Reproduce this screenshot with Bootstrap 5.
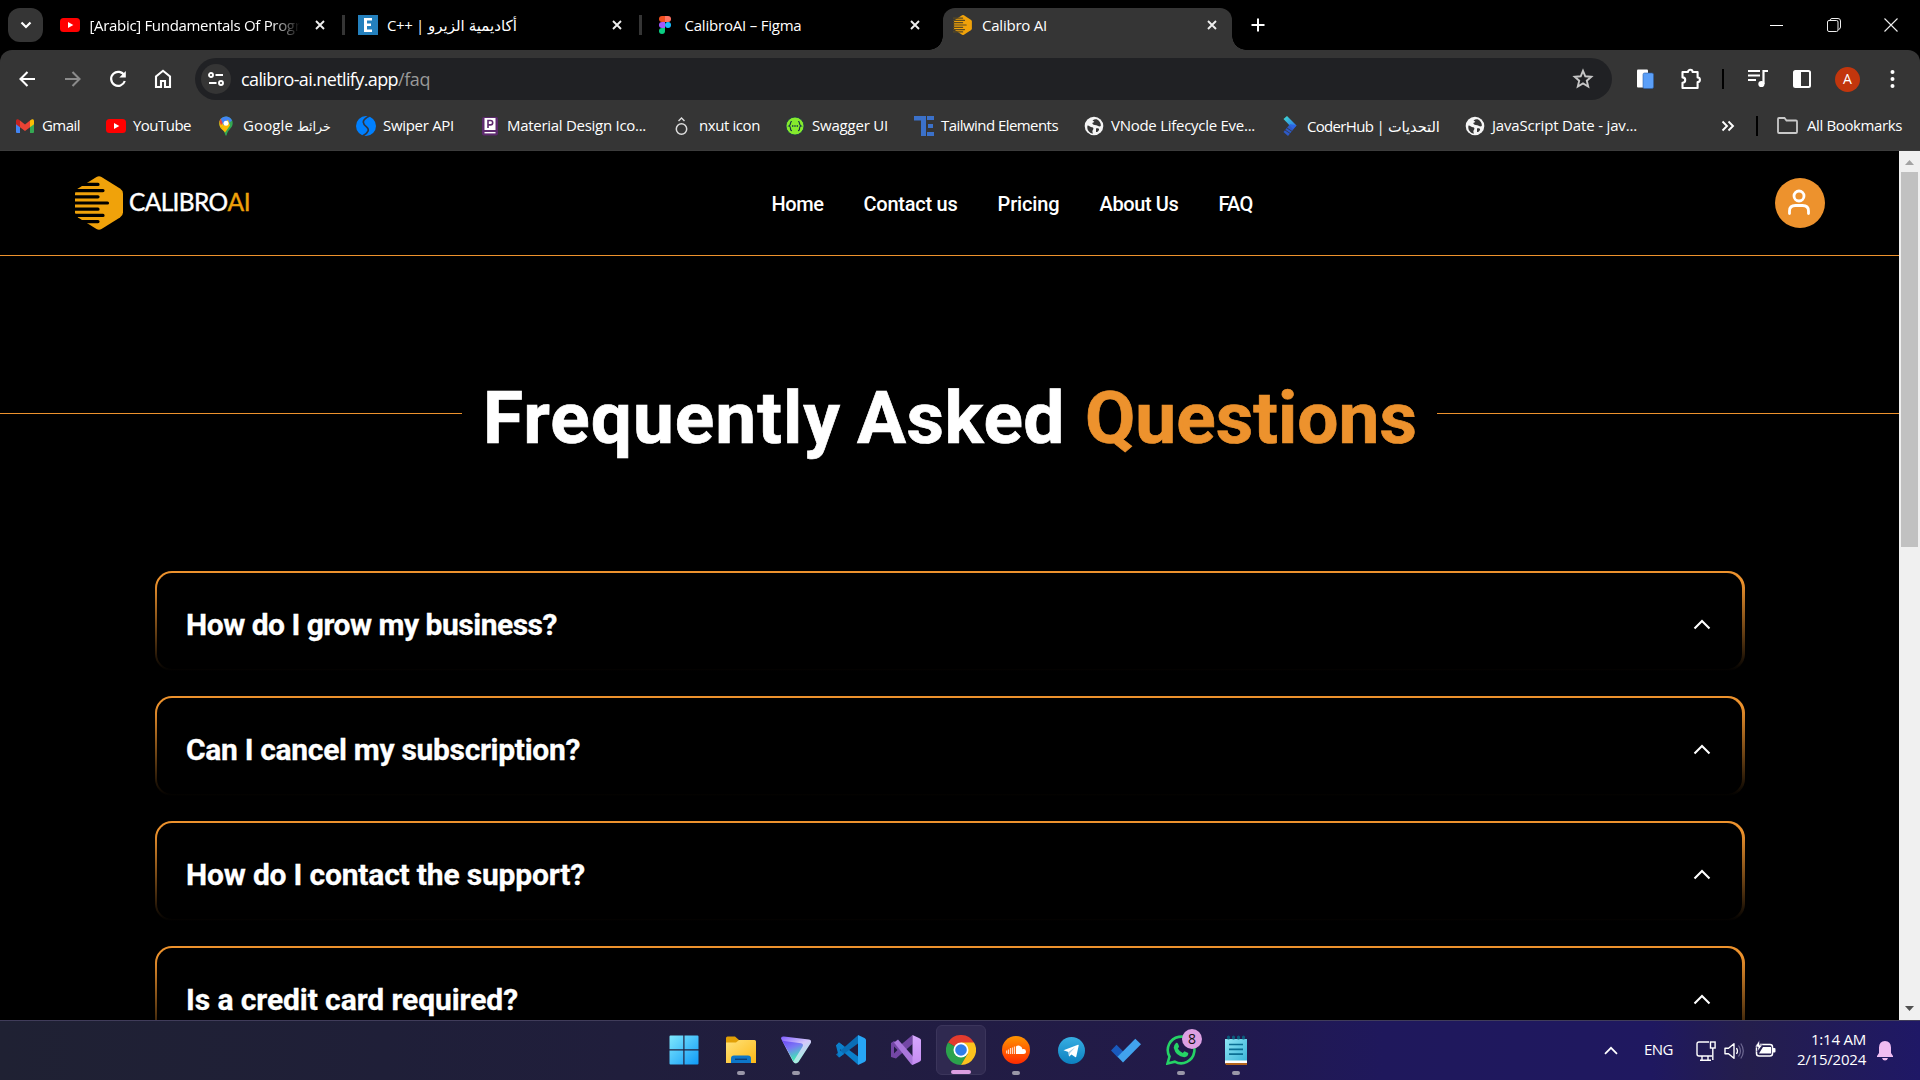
<!DOCTYPE html>
<html lang="en">
<head>
<meta charset="utf-8">
<meta name="viewport" content="width=device-width, initial-scale=1">
<title>Calibro AI</title>
<link href="https://cdn.jsdelivr.net/npm/bootstrap@5.3.0/dist/css/bootstrap.min.css" rel="stylesheet">
<style>
  :root { --accent: #ed922d; --chrome: #353535; --ui: "Open Sans", "Noto Sans", "DejaVu Sans", sans-serif; }
  html, body { height: 1080px; overflow: hidden; }
  body { background: #000; color: #fff; font-family: var(--ui); font-size: 15px; line-height: 20px; width: 1920px; }
  svg { display: block; flex: none; }
  [data-fit] { white-space: nowrap; display: inline-block; flex: none; }

  /* tab strip */
  .tabstrip { height: 50px; }
  .tab-search { width: 35px; height: 34px; border-radius: 12px; background: var(--chrome); margin: 8px 7px 0 8px; }
  .btab { width: 297.5px; height: 42px; margin-top: 8px; padding: 0 0 8px 10px; flex: none; }
  .btab .ttl { width: 210px; margin-left: 9.5px; overflow: hidden; white-space: nowrap; }
  .btab .ttl.fade-end { -webkit-mask-image: linear-gradient(90deg, #000 86%, transparent); mask-image: linear-gradient(90deg, #000 86%, transparent); }
  .btab .x { margin-left: 15px; }
  .btab .sep { width: 3px; height: 20px; background: var(--chrome); margin-left: 17px; }
  .btab.on { width: 289px; background: var(--chrome); border-radius: 12px 12px 0 0; position: relative; }
  .btab.on::before, .btab.on::after { content: ""; position: absolute; bottom: 0; width: 14px; height: 14px; }
  .btab.on::before { left: -14px; background: radial-gradient(circle at 0 0, transparent 13.5px, var(--chrome) 14px); }
  .btab.on::after { right: -14px; background: radial-gradient(circle at 100% 0, transparent 13.5px, var(--chrome) 14px); }
  .newtab { margin: 18px 0 0 19px; }
  .winctl { margin-right: 22px; gap: 43px; height: 49px; }

  /* toolbar */
  .tools { height: 58px; background: var(--chrome); border-radius: 12px 12px 0 0; padding: 0 16px; }
  .omni { width: 1417px; height: 42px; background: #202124; border-radius: 21px; padding: 0 18px 0 6px; margin-left: 21px; font-size: 18px; line-height: 24px; }
  .url { margin-left: 10px; }
  .url .path { color: #999; }
  .tune { width: 30px; height: 30px; background: var(--chrome); flex: none; }
  .vbar { width: 2px; height: 20px; background: #000; flex: none; }
  .who { width: 25px; height: 25px; background: #c2360d; font-size: 14px; flex: none; }

  /* bookmarks */
  .bmarks { height: 43px; background: var(--chrome); display: grid; align-items: center; padding: 0 0 7px 15px;
    grid-template-columns: 91px 110px 140px 124px 192px 113px 129px 170px 196px 185px 256px 35px 21px 1fr; border-bottom: 1px solid #3c3c3c; }
  .bmarks a { display: flex; align-items: center; gap: 7px; color: #f1f1f1; text-decoration: none; white-space: nowrap; }
  .bmarks a > span { padding-bottom: 2px; }

  /* page */
  .view { height: 869px; }
  .site { width: 1899px; overflow: hidden; font-family: Roboto, sans-serif; }
  .topnav { height: 105px; border-bottom: 1px solid var(--accent); padding: 0 74px 0 75px; }
  .brandbox { width: 304px; }
  .userbox { width: 180px; }
  .brandtxt { font: 400 24.500px/30px Lato, sans-serif; -webkit-text-stroke: .4px; margin: -2px 0 0 6px; }
  .brandtxt b { color: #efa10a; font-weight: 400; }
  .mainlinks { gap: 40px; font-size: 20px; line-height: 28px; font-weight: 500; padding-top: 2px; }
  .mainlinks a { color: #fff; text-decoration: none; }
  .user { width: 50px; height: 50px; background: var(--accent); }
  .hero { margin-top: 104px; height: 108px; }
  .hero i { height: 1px; background: var(--accent); margin-top: -1px; }
  .hero h1 { font-size: 73px; line-height: 110px; font-weight: 700; margin: 8px 20px 0 21px; gap: 16px; -webkit-text-stroke: .7px; }
  .accent { color: var(--accent); }
  .faqs { margin: 103px 154px 0 155px; gap: 25px; }
  .faq { height: 100px; border-radius: 17px; padding: 2px 3px 2px 2px; background: linear-gradient(180deg, var(--accent), var(--accent) 10%, #000 100%); flex: none; }
  .faq > div { height: 96px; border-radius: 15px; background: #000; padding: 8px 31px 0 29px; font-size: 30px; line-height: 36px; font-weight: 700; -webkit-text-stroke: .3px; }
  .faq svg { margin-top: -2px; }
  .sbar { width: 21px; background: #f0f0f0; }
  .thumb { width: 17px; height: 375px; background: #c1c1c1; }

  /* taskbar */
  .taskbar { height: 60px; border-top: 1px solid #403c5a; background: linear-gradient(90deg, #1f2133 0, #1f1f38 20%, #211d40 45%, #221a4a 62%, #1f185c 72%, #1f1860 86%, #241e4c 91%, #1f1866 100%); }
  .apps { margin-left: 661px; gap: 5px; padding-top: 4px; }
  .app { width: 50px; height: 50px; border-radius: 6px; position: relative; display: flex; align-items: center; justify-content: center; }
  .app.start { padding-right: 4px; }
  .app.cur { background: #2f2950; border: 1px solid #3b355b; }
  .app.run::after, .app.cur::after { content: ""; position: absolute; bottom: 0; width: 8px; height: 4px; border-radius: 2px; background: #9a97a8; }
  .app.cur::after { width: 20px; background: #dc9fe2; }
  .cnt { position: absolute; left: 26px; top: 4px; width: 20px; height: 20px; border-radius: 50%; background: #dda0e3; color: #111; font-size: 14px; line-height: 20px; text-align: center; }
  .tray { margin-right: 27px; font-size: 15px; }
  .clock { width: 69px; margin: -3px 0 0 21px; }
</style>
<script src="https://cdn.jsdelivr.net/npm/bootstrap@5.3.0/dist/js/bootstrap.bundle.min.js"></script>
</head>
<body>
<svg width="0" height="0" style="position:absolute">
  <defs>
    <symbol id="cross" viewBox="0 0 10 10"><path d="M1 1l8 8M9 1L1 9" stroke="#eee" stroke-width="1.9" fill="none"/></symbol>
    <symbol id="yt" viewBox="0 0 20 14"><rect width="20" height="14" rx="3.5" fill="#f00"/><path d="M8 4l5.300 3L8 10z" fill="#fff"/></symbol>
    <symbol id="hex" viewBox="0 0 48 54">
      <path d="M21.500 1q2.500-1.500 5 0L45 12.500q3 2 3 5v19q0 3-3 5L26.500 53q-2.500 1.500-5 0L3 41.500q-3-2-3-5v-19q0-3 3-5z" fill="#f0a20a"/>
      <g stroke-width="3.200" stroke="var(--hole,#000)" stroke-linecap="round"><path d="M-4 8.400h27M-4 14.600h32M-4 20.800h27M-4 27h36.500M-4 33.200h27M-4 39.400h32M-4 45.600h27"/></g>
    </symbol>
    <symbol id="globe" viewBox="0 0 20 20"><circle cx="10" cy="10" r="9.300" fill="#f4f4f4"/><path d="M3.500 9.500c2 .2 3 1.700 4.500 1.700s2 1.800.6 3.200c-.6.800.2 2 .2 3.300C5 17 2.500 13.500 3.500 9.500zM8.500 4.500c2.500-2 5-1.500 6.500.5 1.500 1.800 2 3.500 1.800 5-1.500 1.200-3-.6-4.500-.8-2-.2-3.800-.6-4-2 .1-1.200 1.700-.6 2-1.500zM12 12.500c2-.5 3.500.3 3 1.500-.6 1.300-2 2.300-3 2z" fill="#353535"/></symbol>
    <symbol id="up" viewBox="0 0 18 11"><path d="M1.500 9.500L9 2l7.500 7.500" stroke="#fff" stroke-width="2.100" fill="none"/></symbol>
    <linearGradient id="win" x1="0" y1="0" x2="1" y2="1"><stop stop-color="#7fe8fd"/><stop offset="1" stop-color="#0f9af7"/></linearGradient>
    <linearGradient id="fold" x1="0" y1="0" x2="1" y2="1"><stop stop-color="#ffe27a"/><stop offset="1" stop-color="#fdb916"/></linearGradient>
    <linearGradient id="pro" x1="0" y1="0" x2=".4" y2="1"><stop stop-color="#6b3df5"/><stop offset=".5" stop-color="#7a78f5"/><stop offset="1" stop-color="#3fe8b5"/></linearGradient>
    <linearGradient id="pro2" x1="0" y1="0" x2=".6" y2="1"><stop stop-color="#7e5cff"/><stop offset=".5" stop-color="#d5c8fb"/><stop offset="1" stop-color="#9ff5dc"/></linearGradient>
    <linearGradient id="snd" x1="0" y1="0" x2="0" y2="1"><stop stop-color="#ff9500"/><stop offset="1" stop-color="#ff2a00"/></linearGradient>
    <linearGradient id="tg" x1="0" y1="0" x2="0" y2="1"><stop stop-color="#37aee2"/><stop offset="1" stop-color="#0c80c0"/></linearGradient>
    <linearGradient id="vsr" x1="0" y1="0" x2="0" y2="1"><stop stop-color="#d7a8ff"/><stop offset="1" stop-color="#c58cf2"/></linearGradient>
    <linearGradient id="cod" x1="0" y1="0" x2="1" y2="1"><stop stop-color="#3fe0d0"/><stop offset="1" stop-color="#2b62f0"/></linearGradient>
    <linearGradient id="note" x1="0" y1="0" x2="1" y2="1"><stop stop-color="#8fe6f5"/><stop offset="1" stop-color="#35b1d6"/></linearGradient>
  </defs>
</svg>

<div class="tabstrip d-flex">
  <div class="tab-search d-flex align-items-center justify-content-center"><svg width="12" height="8" viewBox="0 0 12 8"><path d="M1.500 1.500L6 6l4.500-4.500" stroke="#fff" stroke-width="2.200" fill="none"/></svg></div>
  <div class="btab d-flex align-items-center">
    <svg width="20" height="14"><use href="#yt"/></svg>
    <div class="ttl fade-end"><span data-fit="211">[Arabic] Fundamentals Of Progr</span></div>
    <svg class="x" width="10" height="10"><use href="#cross"/></svg><div class="sep"></div>
  </div>
  <div class="btab d-flex align-items-center">
    <svg width="20" height="20" viewBox="0 0 20 20"><rect width="20" height="20" fill="#2480bd"/><path d="M6 3h8v2.500H9v3h4V11H9v3.500h5V17H6z" fill="#fff"/></svg>
    <div class="ttl"><span data-fit="37">C++ |</span> <span dir="rtl" data-scale="89">أكاديمية الزيرو</span></div>
    <svg class="x" width="10" height="10"><use href="#cross"/></svg><div class="sep"></div>
  </div>
  <div class="btab d-flex align-items-center">
    <svg width="20" height="20" viewBox="0 0 20 20"><path d="M10 1H7a3 3 0 000 6h3z" fill="#f24e1e"/><path d="M10 1h3a3 3 0 010 6h-3z" fill="#ff7262"/><path d="M10 7H7a3 3 0 000 6h3z" fill="#a259ff"/><circle cx="13" cy="10" r="3" fill="#1abcfe"/><path d="M10 13H7a3 3 0 103 3z" fill="#0acf83"/></svg>
    <div class="ttl"><span data-fit="117">CalibroAI – Figma</span></div>
    <svg class="x" width="10" height="10"><use href="#cross"/></svg>
  </div>
  <div class="btab on d-flex align-items-center">
    <svg width="20" height="20" style="--hole:#5a4a22"><use href="#hex"/></svg>
    <div class="ttl"><span data-fit="65">Calibro AI</span></div>
    <svg class="x" width="10" height="10"><use href="#cross"/></svg>
  </div>
  <svg class="newtab" width="14" height="14" viewBox="0 0 14 14"><path d="M7 .5v13M.5 7h13" stroke="#fff" stroke-width="2"/></svg>
  <div class="winctl d-flex align-items-center ms-auto">
    <svg width="14" height="14"><path d="M0 7.500h13" stroke="#fff" stroke-width="1"/></svg>
    <svg width="14" height="14" viewBox="0 0 14 14"><path d="M3 2.500V2q.5-1.500 2-1.500h6q2.500 0 2.500 2.500v6q0 2-2 2.500" stroke="#eee" fill="none"/><rect x=".5" y="2.500" width="10.500" height="11" rx="1.500" stroke="#eee" fill="#000"/></svg>
    <svg width="14" height="14" viewBox="0 0 14 14"><path d="M.5.500l13 13M13.500.500l-13 13" stroke="#eee" stroke-width="1.100"/></svg>
  </div>
</div>

<div class="tools d-flex align-items-center">
  <svg width="22" height="22" viewBox="0 0 22 22"><path d="M19 11H5M11.500 4L4.500 11l7 7" stroke="#fff" stroke-width="2.100" fill="none"/></svg>
  <svg class="ms-4" width="22" height="22" viewBox="0 0 22 22"><path d="M3 11h14M10.500 4l7 7-7 7" stroke="#8b8b8b" stroke-width="2.100" fill="none"/></svg>
  <svg class="ms-4" width="20" height="22" viewBox="0 0 20 22"><path d="M16.300 7.500A7 7 0 1016.800 13" stroke="#fff" stroke-width="2.200" fill="none"/><path d="M17.800 3v6.500h-6.500z" fill="#fff"/></svg>
  <svg class="ms-4" width="22" height="22" viewBox="0 0 22 22"><path d="M4 19V8.500l7-5.700 7 5.700V19h-5v-6H9v6z" stroke="#fff" stroke-width="2.100" fill="none"/></svg>
  <div class="omni d-flex align-items-center">
    <div class="tune rounded-circle d-flex align-items-center justify-content-center"><svg width="16" height="14" viewBox="0 0 16 14"><g stroke="#fff" stroke-width="1.900" fill="none"><circle cx="3" cy="3" r="2"/><path d="M7.500 3H15M1 11h7.500"/><circle cx="13" cy="11" r="2"/></g></svg></div>
    <span class="url text-nowrap"><span data-fit="157">calibro-ai.netlify.app</span><span class="path" data-fit="32">/faq</span></span>
    <svg class="ms-auto" width="22" height="22" viewBox="0 0 22 22"><path d="M11 2.800l2.300 5.500 6 .5-4.500 3.900 1.400 5.800L11 15.400l-5.200 3.100 1.400-5.800L2.700 8.800l6-.5z" stroke="#c6c6c6" stroke-width="1.900" fill="none"/></svg>
  </div>
  <svg style="margin-left:24px" width="18" height="20" viewBox="0 0 18 20"><rect x="1" y=".5" width="11" height="18" rx="1" fill="#fff"/><rect x="7" y="4" width="10.500" height="15.500" rx="1.500" fill="#5b9ff8" stroke="#2e5fa8" stroke-width=".6"/></svg>
  <svg style="margin-left:25px" width="24" height="24" viewBox="0 0 24 24"><path d="M3.500 5H9a2.300 2.300 0 014.600 0h5v5.500a2.300 2.300 0 010 4.600V21H3.500v-5.200a2.700 2.700 0 000-5.400z" stroke="#fff" stroke-width="2.100" fill="none" stroke-linejoin="round"/></svg>
  <div class="vbar" style="margin-left:19px"></div>
  <svg style="margin-left:24px" width="20" height="20" viewBox="0 0 20 20"><path d="M0 2h12M0 6.500h12M0 11h8" stroke="#fff" stroke-width="2.200"/><path d="M15.500 15V2h4.500" stroke="#fff" stroke-width="2.200" fill="none"/><circle cx="13.400" cy="15" r="3.100" fill="#fff"/></svg>
  <svg style="margin-left:25px" width="18" height="18" viewBox="0 0 18 18"><rect x="1" y="1" width="16" height="16" rx="1.500" fill="none" stroke="#fff" stroke-width="2"/><path d="M1 1h7v16H1z" fill="#fff"/></svg>
  <div class="who rounded-circle d-flex align-items-center justify-content-center" style="margin-left:24px">A</div>
  <svg style="margin-left:30px" width="5" height="20" viewBox="0 0 5 20"><g fill="#fff"><circle cx="2.500" cy="3" r="2"/><circle cx="2.500" cy="10" r="2"/><circle cx="2.500" cy="17" r="2"/></g></svg>
</div>

<div class="bmarks">
  <a><svg width="20" height="16" viewBox="0 0 20 16"><path d="M1 3v11q0 1 1 1h3V6z" fill="#4285f4"/><path d="M19 3v11q0 1-1 1h-3V6z" fill="#34a853"/><path d="M15 2.500l2-1.200q2-.6 2 1.700v3.200l-4 3z" fill="#fbbc04"/><path d="M1 3q0-2.300 2-1.700L5 2.500v6.700l-4-3z" fill="#c5221f"/><path d="M5 2.500l5 4 5-4v6.700l-5 3.800-5-3.800z" fill="#ea4335"/></svg><span data-fit="38">Gmail</span></a>
  <a><svg width="20" height="14"><use href="#yt"/></svg><span data-fit="58">YouTube</span></a>
  <a><svg width="20" height="20" viewBox="0 0 20 20"><path d="M10 .5a6.700 6.700 0 016.700 6.700c0 5-5.200 6.300-6.200 12.300h-1C8.500 13.500 3.300 12.200 3.300 7.200A6.700 6.700 0 0110 .5z" fill="#34a853"/><path d="M3.300 7.200A6.700 6.700 0 015 2.600L8 9l-3.200 3.200c-.9-1.400-1.500-3-1.500-5z" fill="#fbbc04"/><path d="M4.800 2.800L8 5.500 5 9.200 3.500 5.500z" fill="#ea4335"/><path d="M4.800 2.800A6.700 6.700 0 0116 4.400L8 11z" fill="#4285f4"/><path d="M4.800 12.200L12 3.500l2 6-5 7c-1-1.800-3-2.800-4.200-4.300z" fill="#fbbc04"/><circle cx="10" cy="7.200" r="2.500" fill="#fff"/></svg><span class="pb-0"><span data-fit="50">Google</span> <span data-scale="34">خرائط</span></span></a>
  <a><svg width="20" height="20" viewBox="0 0 20 20"><circle cx="10" cy="10" r="10" fill="#0080ff"/><path d="M13.500 0C4 4.500 7.500 8.500 10.500 10.800S13 16.500 6.500 20" stroke="#303540" stroke-width="1.700" fill="none"/></svg><span data-fit="71">Swiper API</span></a>
  <a><svg width="20" height="20" viewBox="0 0 20 20"><rect x="2" y="1" width="16" height="18.500" rx="2" fill="#5d2a6e"/><rect x="4.500" y="2" width="11" height="12" fill="#fff"/><path d="M8 12V4.500h2.500a2.200 2.200 0 010 4.400H8" stroke="#5d2a6e" stroke-width="1.600" fill="none"/><path d="M4.500 16.700h11" stroke="#fff" stroke-width="1.400"/></svg><span data-fit="139">Material Design Ico...</span></a>
  <a><svg width="20" height="20" viewBox="0 0 20 20"><circle cx="9.500" cy="13" r="5.200" stroke="#ddd" stroke-width="1.500" fill="none"/><path d="M6.500 5l3-3 3 3" stroke="#ddd" stroke-width="1.400" fill="none"/></svg><span data-fit="61">nxut icon</span></a>
  <a><svg width="20" height="20" viewBox="0 0 20 20"><circle cx="10" cy="10" r="9" fill="#85ea2d" stroke="#173647" stroke-width=".8"/><path d="M7 5.500q-1.500 0-1.500 1.800T4 10q1.500.2 1.500 2.500T7 14.500M13 5.500q1.500 0 1.500 1.800T16 10q-1.500.2-1.500 2.500T13 14.500" stroke="#173647" stroke-width="1.200" fill="none"/><path d="M7 10h6" stroke="#173647" stroke-width="1.300" stroke-dasharray="1.400 .9"/></svg><span data-fit="76">Swagger UI</span></a>
  <a><svg width="20" height="20" viewBox="0 0 20 20"><path d="M0 0h12v20H7V4.500H0zM13 0h7v4h-7zM14 8h5v4h-5zM13 16h7v4h-7z" fill="#3b71ca"/></svg><span data-fit="117">Tailwind Elements</span></a>
  <a><svg width="20" height="20"><use href="#globe"/></svg><span data-fit="144">VNode Lifecycle Eve...</span></a>
  <a><svg width="20" height="20" viewBox="0 0 20 20"><path d="M3.500 3L7 0l9.500 9.500L13 13z" fill="url(#cod)"/><path d="M16.500 9.500L8 20l-4.500-4L10 8z" fill="#2c5fe0" opacity=".85"/><path d="M5 14l6 4M7 12l6 4" stroke="#353535" stroke-width=".8"/></svg><span class="pb-0"><span data-fit="77">CoderHub |</span> <span data-scale="52">التحديات</span></span></a>
  <a><svg width="20" height="20"><use href="#globe"/></svg><span data-fit="145">JavaScript Date - jav...</span></a>
  <svg width="14" height="12" viewBox="0 0 14 12"><path d="M1.500 1.500L6 6l-4.500 4.500M7.500 1.500L12 6l-4.500 4.500" stroke="#fff" stroke-width="1.900" fill="none"/></svg>
  <div class="vbar"></div>
  <a style="gap:9px"><svg width="21" height="17" viewBox="0 0 21 17"><path d="M1 2q0-1 1-1h5.500l2 2.500H19q1 0 1 1V15q0 1-1 1H2q-1 0-1-1z" stroke="#c9c9c9" stroke-width="1.800" fill="none"/></svg><span data-fit="95">All Bookmarks</span></a>
</div>

<div class="view d-flex">
  <main class="site d-flex flex-column">
    <header class="topnav d-flex align-items-center justify-content-between flex-shrink-0">
      <div class="brandbox d-flex align-items-center">
        <svg width="48" height="54"><use href="#hex"/></svg>
        <span class="brandtxt text-nowrap"><span data-fit="98.500">CALIBRO</span><b data-fit="23">AI</b></span>
      </div>
      <nav class="mainlinks d-flex">
        <a data-fit="52">Home</a><a data-fit="94">Contact us</a><a data-fit="62">Pricing</a><a data-fit="79">About Us</a><a data-fit="34">FAQ</a>
      </nav>
      <div class="userbox d-flex justify-content-end">
        <div class="user rounded-circle d-flex align-items-center justify-content-center"><svg width="24" height="28" viewBox="0 0 24 28" style="margin:-3px 3px 0 0"><g stroke="#fff" stroke-width="2.800" fill="none" stroke-linecap="round"><circle cx="12" cy="8" r="5"/><path d="M2.500 25.500V23q0-5.500 6-5.500h7q6 0 6 5.500v2.500"/></g></svg></div>
      </div>
    </header>
    <section class="hero d-flex align-items-center flex-shrink-0">
      <i class="flex-fill"></i>
      <h1 class="d-flex"><span data-fit="358">Frequently</span><span data-fit="208">Asked</span><span class="accent ms-1" data-fit="332">Questions</span></h1>
      <i class="flex-fill"></i>
    </section>
    <section class="faqs d-flex flex-column">
      <div class="faq"><div class="d-flex align-items-center justify-content-between"><span data-fit="371">How do I grow my business?</span><svg width="18" height="11"><use href="#up"/></svg></div></div>
      <div class="faq"><div class="d-flex align-items-center justify-content-between"><span data-fit="394">Can I cancel my subscription?</span><svg width="18" height="11"><use href="#up"/></svg></div></div>
      <div class="faq"><div class="d-flex align-items-center justify-content-between"><span data-fit="399">How do I contact the support?</span><svg width="18" height="11"><use href="#up"/></svg></div></div>
      <div class="faq"><div class="d-flex align-items-center justify-content-between"><span data-fit="332">Is a credit card required?</span><svg width="18" height="11"><use href="#up"/></svg></div></div>
    </section>
  </main>
  <div class="sbar d-flex flex-column align-items-center">
    <svg width="21" height="21"><path d="M6 14h9l-4.500-5z" fill="#a3a3a3"/></svg>
    <div class="thumb"></div>
    <svg class="mt-auto" width="21" height="21"><path d="M6 7h9l-4.500 5z" fill="#505050"/></svg>
  </div>
</div>

<footer class="taskbar d-flex justify-content-between">
  <div class="apps d-flex">
    <div class="app start"><svg width="30" height="30" viewBox="0 0 30 30"><path d="M.5 1.500q0-1 1-1h12.800v13.800H.500zM15.500.500h13q1 0 1 1v12.800h-14zM.5 15.500h13.800v14H1.500q-1 0-1-1zM15.500 15.500h14v13q0 1-1 1h-13z" fill="url(#win)"/></svg></div>
    <div class="app run"><svg width="30" height="28" viewBox="0 0 30 28"><path d="M0 2q0-1.500 1.500-1.500H9l4 3.500h15v5H0z" fill="#e2a006"/><path d="M0 6.500h10L13 4h15.500Q30 4 30 5.500V27H0z" fill="url(#fold)"/><path d="M5 27v-4.500q0-3 3-3h14q3 0 3 3V27z" fill="#0d76c8"/><path d="M9 23.300h12" stroke="#0a3f78" stroke-width="1.400"/></svg></div>
    <div class="app run"><svg width="30" height="28" viewBox="0 0 30 28"><path d="M0 2.500Q0 0 3 .5l25 3q3.500.8 1.500 4L17.500 26q-3 3-5.500-.5z" fill="url(#pro2)"/><path d="M0 2.500q.5 2 3 2.500l17 2.200q3 .8 1.500 3.500l-9 14.500z" fill="url(#pro)"/></svg></div>
    <div class="app"><svg width="30" height="30" viewBox="0 0 30 30"><path d="M0 10.500l3-3 19 14v8.300z" fill="#0b7fcb"/><path d="M0 19.500l3 3 19-14V.200z" fill="#0a6db5"/><path d="M0 10.500l3-3 5 3.700-4.200 3.800L8 19l-5 3.500z" fill="#0b7fcb"/><path d="M22 0l6.500 3Q30 3.800 30 5v20q0 1.200-1.500 2L22 30z" fill="#27a5f5"/></svg></div>
    <div class="app"><svg width="30" height="30" viewBox="0 0 30 30"><path d="M0 8l3-2 6 4.500L21.500 0v9L5 23.500 0 22z" fill="#7347a5"/><path d="M3 11.500v7L6.500 15z" fill="#211c42"/><path d="M3 7.500L7 4.500l15 17V30q-1.200 0-2-1z" fill="#a977db"/><path d="M21.500 0L28 3q2 .8 2 2v20q0 1.200-2 2l-6.500 3z" fill="url(#vsr)"/></svg></div>
    <div class="app cur"><svg width="30" height="30" viewBox="0 0 30 30"><path d="M15 15L2 7.500A15 15 0 0128 7.500z" fill="#e33b2e"/><path d="M15 15L2 7.500A15 15 0 0015 30l6.500-11z" fill="#2ba24c"/><path d="M15 7.500h13A15 15 0 0115 30l6.500-11z" fill="#fcc31e"/><circle cx="15" cy="15" r="7.500" fill="#fff"/><circle cx="15" cy="15" r="5.800" fill="#2f7de9"/></svg></div>
    <div class="app run"><svg width="28" height="28" viewBox="0 0 28 28"><circle cx="14" cy="14" r="14" fill="url(#snd)"/><path d="M14 18V10.500q1.500-1.300 3.500-.8 2.500.8 3 3.500 3.300-.6 3.500 2.300 0 2.500-2.700 2.500z" fill="#fff"/><path d="M12.500 10.500V18M10.500 11.500V18M8.500 12V18M6.500 13.500V18M4.700 14.500v3" stroke="#ffd9c0" stroke-width="1.200"/></svg></div>
    <div class="app"><svg width="27" height="27" viewBox="0 0 27 27"><circle cx="13.500" cy="13.500" r="13.500" fill="url(#tg)"/><path d="M5.500 13.300L20 7.700q.9-.2.700.9l-2.400 11q-.3 1-1.200.5l-3.600-2.700-2 1.900q-.5.300-.6-.3l-.5-4z" fill="#fff"/><path d="M10.500 15l7-5-5.500 6-.9 3z" fill="#a9cfe6"/></svg></div>
    <div class="app"><svg width="30" height="25" viewBox="0 0 30 25"><path d="M0 12.500l5.500-5.800 7 7-5.700 5.800z" fill="#195abd"/><path d="M6.500 18.800L24.300.800 30 6.300 12 24.500z" fill="#41a3ee"/></svg></div>
    <div class="app run"><svg width="30" height="30" viewBox="0 0 30 30"><path d="M1.500 28.500l2-7A13.300 13.300 0 118.800 26.700z" stroke="#25d366" stroke-width="2.600" fill="none"/><path d="M10 8q1.300-.6 2 .8l1 2.500q.2.800-1.200 2.200 1.900 3.400 5 4.600l1.600-1.900 3.900 1.900q0 4-4 4.200-8.500-.8-10.600-9.500Q8 9.500 10 8z" fill="#25d366"/></svg><span class="cnt">8</span></div>
    <div class="app run"><svg width="22" height="30" viewBox="0 0 22 30"><path d="M0 4h22v25H0z" fill="url(#note)"/><path d="M0 25.500h22V28H0z" fill="#fff"/><path d="M0 28h22v2H1z" fill="#b5651d"/><path d="M4 9.500h14M4 14.300h14M4 19.200h14" stroke="#0b6f93" stroke-width="1.700"/><path d="M3.500 2v1M8.500 2v1M13.500 2v1M18.500 2v1" stroke="#0a5c7c" stroke-width="3" stroke-linecap="round"/></svg></div>
  </div>
  <div class="tray d-flex align-items-center">
    <svg width="14" height="9" viewBox="0 0 14 9"><path d="M1 7.800L7 1.800l6 6" stroke="#fff" stroke-width="1.700" fill="none"/></svg>
    <span class="pb-1" data-fit="29" style="margin-left:26px">ENG</span>
    <svg style="margin-left:23px" width="20" height="20" viewBox="0 0 20 20"><g stroke="#fff" stroke-width="1.400" fill="none"><path d="M13 1H3Q1 1 1 3v10q0 2 2 2h13M6 15v4M12 15v4M4 19.200h11"/><rect x="14.500" y="1" width="4.600" height="6"/><path d="M16.800 7v12"/></g></svg>
    <svg style="margin-left:8px" width="20" height="18" viewBox="0 0 20 18"><path d="M1 6.300v5.400h3.500L10 16.300V1.700L4.500 6.300z" stroke="#fff" stroke-width="1.400" fill="none" stroke-linejoin="round"/><path d="M12.500 6q2 3 0 6" stroke="#fff" stroke-width="1.300" fill="none"/><path d="M14.500 3.500q4 5.500 0 11M16.800 1.500q5 7.500 0 15" stroke="#6e6992" stroke-width="1.200" fill="none"/></svg>
    <svg style="margin:-3px 0 0 11px" width="21" height="18" viewBox="0 0 21 18"><rect x="1.500" y="4.500" width="16" height="11.500" rx="2.500" stroke="#fff" stroke-width="1.500" fill="none"/><path d="M4 13.500L8 7h8v6.500zM18 8h1.500q1 0 1 1v2.500q0 1-1 1H18z" fill="#fff"/><path d="M4.500 0L0 7h3.200L2 12l5.500-7H4.500z" fill="#fff" stroke="#211a55" stroke-width=".6"/></svg>
    <div class="clock text-end"><div><span data-fit="55">1:14 AM</span></div><div><span data-fit="69">2/15/2024</span></div></div>
    <svg style="margin-left:11px" width="16" height="20" viewBox="0 0 16 20"><path d="M8 0q5.800.3 6 6.500V12l2 3v1H0v-1l2-3V6.500Q2.200.300 8 0zM5 17h6q-.8 2.500-3 2.500T5 17z" fill="#f0bdf2"/></svg>
  </div>
</footer>

<script>
  // Track each label to its design width; joined scripts are scaled instead of letter-spaced.
  document.querySelectorAll('[data-fit]').forEach(el => {
    const want = +el.dataset.fit, n = el.textContent.length;
    el.style.letterSpacing = ((want - el.getBoundingClientRect().width) / n).toFixed(3) + 'px';
  });
  document.querySelectorAll('[data-scale]').forEach(el => {
    el.style.display = 'inline-block';
    el.style.fontSize = (parseFloat(getComputedStyle(el).fontSize) * el.dataset.scale / el.getBoundingClientRect().width).toFixed(2) + 'px';
  });
</script>
</body>
</html>
